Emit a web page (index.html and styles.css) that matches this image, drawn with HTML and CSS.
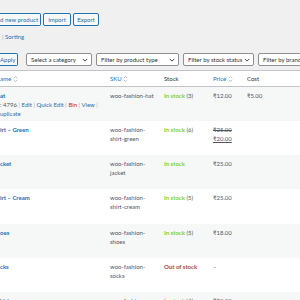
FILE: index.html
```
<!DOCTYPE html>
<html lang="en">
<head>
  <meta charset="UTF-8" />
  <title>Products</title>
  <link rel="stylesheet" href="styles.css">
</head>
<body>
  <div class="wrap">
    <div class="title-row">
      <a class="btn btn-cut w-add">d new product</a>
      <a class="btn w-import">Import</a>
      <a class="btn w-export">Export</a>
    </div>

    <div class="subsubsub"><span class="sep">|</span> <a>Sorting</a></div>

    <div class="filters">
      <a class="btn btn-cut apply">Apply</a>
      <div class="select w-cat">Select a category <svg class="chev" viewBox="0 0 8 5"><path d="M1 1l3 3 3-3"/></svg></div>
      <div class="select w-type">Filter by product type <svg class="chev" viewBox="0 0 8 5"><path d="M1 1l3 3 3-3"/></svg></div>
      <div class="select w-stock">Filter by stock status <svg class="chev" viewBox="0 0 8 5"><path d="M1 1l3 3 3-3"/></svg></div>
      <div class="select w-brand">Filter by brand <svg class="chev" viewBox="0 0 8 5"><path d="M1 1l3 3 3-3"/></svg></div>
    </div>

    <table class="list">
      <colgroup>
        <col style="width:110px"><col style="width:54px"><col style="width:49px"><col style="width:34px"><col>
      </colgroup>
      <thead>
        <tr>
          <th><a>ame</a> <svg class="sort" viewBox="0 0 6 9"><path d="M1 3.5l2-2 2 2M1 5.5l2 2 2-2"/></svg></th>
          <th><a>SKU</a> <svg class="sort" viewBox="0 0 6 9"><path d="M1 3.5l2-2 2 2M1 5.5l2 2 2-2"/></svg></th>
          <th>Stock</th>
          <th><a>Price</a> <svg class="sort" viewBox="0 0 6 9"><path d="M1 3.5l2-2 2 2M1 5.5l2 2 2-2"/></svg></th>
          <th>Cost</th>
        </tr>
      </thead>
      <tbody>
        <tr>
          <td>
            <a class="name">at</a>
            <div class="actions">: 4796 <span class="sep">|</span> <a>Edit</a> <span class="sep">|</span> <a>Quick Edit</a> <span class="sep">|</span> <a class="bin">Bin</a> <span class="sep">|</span> <a>View</a> <span class="sep">|</span></div>
            <div class="actions"><a>uplicate</a></div>
          </td>
          <td>woo-fashion-hat</td>
          <td><span class="instock">In stock</span> (3)</td>
          <td>₹12.00</td>
          <td>₹5.00</td>
        </tr>
        <tr>
          <td><a class="name">irt – Green</a></td>
          <td>woo-fashion-<br>shirt-green</td>
          <td><span class="instock">In stock</span> (6)</td>
          <td><del>₹25.00</del><br><ins>₹20.00</ins></td>
          <td></td>
        </tr>
        <tr>
          <td><a class="name">cket</a></td>
          <td>woo-fashion-<br>jacket</td>
          <td><span class="instock">In stock</span></td>
          <td>₹25.00</td>
          <td></td>
        </tr>
        <tr>
          <td><a class="name">irt – Cream</a></td>
          <td>woo-fashion-<br>shirt-cream</td>
          <td><span class="instock">In stock</span> (5)</td>
          <td>₹25.00</td>
          <td></td>
        </tr>
        <tr>
          <td><a class="name">oes</a></td>
          <td>woo-fashion-<br>shoes</td>
          <td><span class="instock">In stock</span> (5)</td>
          <td>₹18.00</td>
          <td></td>
        </tr>
        <tr>
          <td><a class="name">cks</a></td>
          <td>woo-fashion-<br>socks</td>
          <td><span class="outstock">Out of stock</span></td>
          <td>–</td>
          <td></td>
        </tr>
        <tr class="last">
          <td><a class="name">kirt</a></td>
          <td>woo-fashion-</td>
          <td><span class="instock">In stock</span> (4)</td>
          <td>₹20.00</td>
          <td></td>
        </tr>
      </tbody>
    </table>
  </div>
</body>
</html>
```

FILE: styles.css
```
body {
  margin: 0;
  background: #f0f0f1;
  color: #3c434a;
  font-family: Lato, "Noto Sans", sans-serif;
  font-size: 6px;
  line-height: 9px;
  overflow: hidden;
}
a {
  color: #2271b1;
  text-decoration: none;
}
.wrap {
  padding-top: 13px;
}
.title-row {
  display: flex;
  gap: 2px;
}
.btn {
  display: flex;
  align-items: center;
  justify-content: center;
  height: 13px;
  box-sizing: border-box;
  padding: 0 4px;
  border: 1px solid #2271b1;
  border-radius: 2px;
  background: #f6f7f7;
  color: #2271b1;
  white-space: nowrap;
  flex-shrink: 0;
}
.btn-cut {
  border-left: none;
  border-radius: 0 2px 2px 0;
  justify-content: flex-start;
  padding-left: 0;
}
.w-add { width: 41px; }
.w-import { width: 28px; }
.w-export { width: 26px; }
.subsubsub {
  margin-top: 6px;
  padding-left: 2px;
  height: 9px;
}
.sep {
  color: #a7aaad;
}
.filters {
  display: flex;
  gap: 4px;
  margin-top: 12px;
}
.apply {
  width: 18px;
  margin-right: 4px;
}
.select {
  display: flex;
  align-items: center;
  justify-content: space-between;
  height: 13px;
  box-sizing: border-box;
  padding: 0 3px 0 4px;
  border: 1px solid #8c8f94;
  border-radius: 2px;
  background: #fff;
  color: #2c3338;
  white-space: nowrap;
  flex-shrink: 0;
}
.w-cat { width: 66px; }
.w-type { width: 83px; }
.w-stock { width: 71px; }
.w-brand { width: 70px; }
.chev {
  width: 6px;
  height: 4px;
  fill: none;
  stroke: #2c3338;
  stroke-width: 1.2;
}
.list {
  margin-top: 4px;
  width: 100%;
  table-layout: fixed;
  border-collapse: collapse;
  background: #fff;
  border-top: 1px solid #c3c4c7;
}
.list th {
  text-align: left;
  font-weight: normal;
  padding: 3px 0;
  border-bottom: 1px solid #c3c4c7;
  white-space: nowrap;
  color: #2c3338;
}
.sort {
  width: 5px;
  height: 8px;
  vertical-align: -2px;
  fill: none;
  stroke: #a7aaad;
  stroke-width: 0.9;
}
.list td {
  vertical-align: top;
  height: 34.3px;
  box-sizing: border-box;
  padding: 4px 2px 0 0;
  color: #50575e;
  white-space: nowrap;
}
.list tbody tr:nth-child(odd) {
  background: #f6f7f7;
}
.list tr.last td {
  height: 12px;
}
.name {
  font-weight: bold;
}
.actions {
  color: #50575e;
}
.bin {
  color: #b32d2e;
}
.instock {
  color: #7ad03a;
  font-weight: bold;
}
.outstock {
  color: #aa4444;
  font-weight: bold;
}
del, ins {
  color: #50575e;
}
ins {
  text-decoration: underline;
}
```
